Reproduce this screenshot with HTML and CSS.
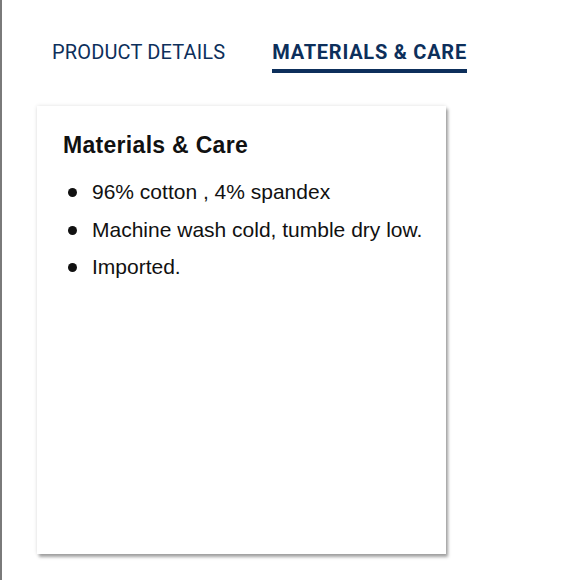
FILE: index.html
```html
<!DOCTYPE html>
<html>
<head>
<meta charset="utf-8">
<link rel="stylesheet" href="styles.css">
</head>
<body>
<div class="page">
  <nav class="tabs">
    <div class="tab">PRODUCT DETAILS</div>
    <div class="tab active">MATERIALS &amp; CARE</div>
  </nav>
  <section class="card">
    <h2 class="card-title">Materials &amp; Care</h2>
    <ul class="list">
      <li>96% cotton , 4% spandex</li>
      <li>Machine wash cold, tumble dry low.</li>
      <li>Imported.</li>
    </ul>
  </section>
</div>
</body>
</html>
```
FILE: styles.css
```css
html, body {
  margin: 0;
  padding: 0;
  background: #fff;
}
body {
  width: 580px;
  height: 580px;
  overflow: hidden;
}
.page {
  height: 580px;
  border-left: 2px solid #7a7a7a;
  box-sizing: border-box;
  padding: 40px 0 0 35px;
}
.tabs {
  display: flex;
  gap: 47px;
  padding-left: 15px;
  font-family: Roboto, "Liberation Sans", sans-serif;
  font-size: 20px;
  color: #0d2f5b;
}
.tab {
  padding-bottom: 5px;
  line-height: 24px;
  letter-spacing: 0.15px;
  border-bottom: 4px solid transparent;
}
.tab.active {
  font-weight: 700;
  letter-spacing: 0.75px;
  border-bottom-color: #0d2f5b;
}
.card {
  margin-top: 33px;
  width: 409px;
  height: 448px;
  box-sizing: border-box;
  background: #fff;
  box-shadow: 2px 3px 3px rgba(0,0,0,0.35), 0 0 4px rgba(0,0,0,0.12);
  padding: 26px 12px 26px 26px;
  font-family: "Liberation Sans", Arial, sans-serif;
  color: #111;
}
.card-title {
  margin: 0;
  font-size: 23px;
  line-height: 26px;
  font-weight: 700;
  letter-spacing: 0.3px;
}
.list {
  list-style: none;
  margin: 15px 0 0;
  padding: 0;
}
.list li {
  position: relative;
  padding-left: 29px;
  font-size: 21px;
  line-height: 37.5px;
  white-space: nowrap;
}
.list li::before {
  content: "";
  position: absolute;
  left: 5px;
  top: 15px;
  width: 9px;
  height: 9px;
  border-radius: 50%;
  background: #111;
}
```
